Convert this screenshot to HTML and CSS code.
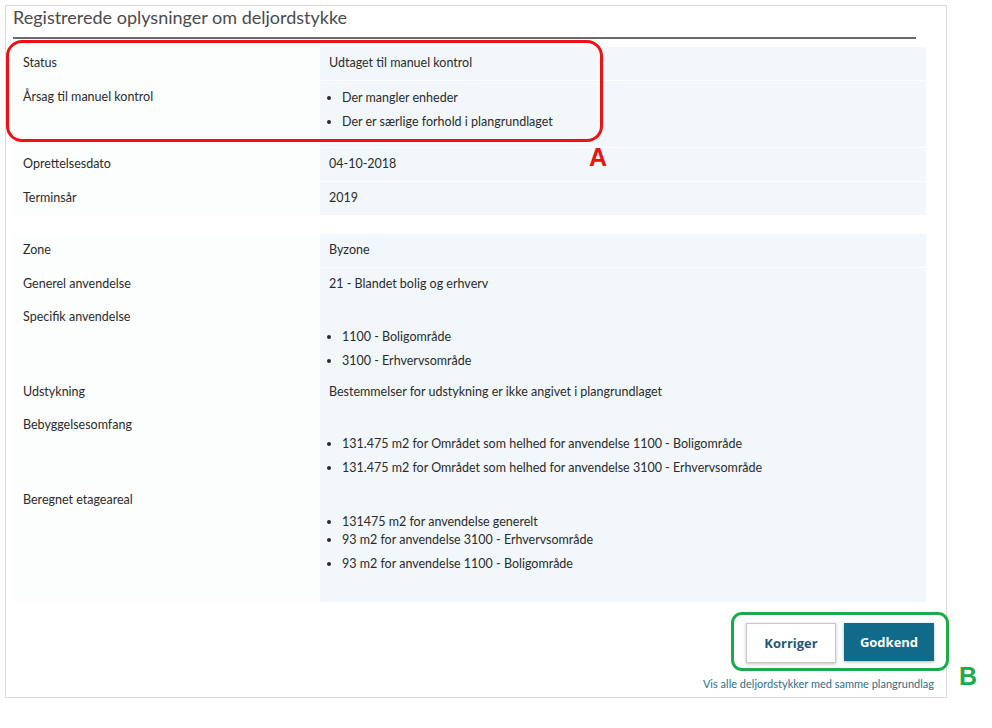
FILE: index.html
```html
<!DOCTYPE html>
<html lang="da">
<head>
    <meta charset="UTF-8">
    <title>Registrerede oplysninger om deljordstykke</title>
    <link rel="stylesheet" href="styles.css">
</head>
<body>
    <div class="page">
        <div class="panel">
            <h2 class="panel-title">Registrerede oplysninger om deljordstykke</h2>

            <div class="group group-first">
                <div class="row divided">
                    <div class="label">Status</div>
                    <div class="value">Udtaget til manuel kontrol</div>
                </div>
                <div class="row divided">
                    <div class="label">Årsag til manuel kontrol</div>
                    <div class="value">
                        <ul class="list list-reason">
                            <li>Der mangler enheder</li>
                            <li>Der er særlige forhold i plangrundlaget</li>
                        </ul>
                    </div>
                </div>
                <div class="row divided">
                    <div class="label">Oprettelsesdato</div>
                    <div class="value">04-10-2018</div>
                </div>
                <div class="row">
                    <div class="label">Terminsår</div>
                    <div class="value">2019</div>
                </div>
            </div>

            <div class="group">
                <div class="row divided">
                    <div class="label">Zone</div>
                    <div class="value">Byzone</div>
                </div>
                <div class="row">
                    <div class="label">Generel anvendelse</div>
                    <div class="value">21 - Blandet bolig og erhverv</div>
                </div>
                <div class="row">
                    <div class="label">Specifik anvendelse</div>
                    <div class="value">
                        <ul class="list list-usage">
                            <li>1100 - Boligområde</li>
                            <li>3100 - Erhvervsområde</li>
                        </ul>
                    </div>
                </div>
                <div class="row">
                    <div class="label">Udstykning</div>
                    <div class="value">Bestemmelser for udstykning er ikke angivet i plangrundlaget</div>
                </div>
                <div class="row">
                    <div class="label">Bebyggelsesomfang</div>
                    <div class="value">
                        <ul class="list list-extent">
                            <li>131.475 m2 for Området som helhed for anvendelse 1100 - Boligområde</li>
                            <li>131.475 m2 for Området som helhed for anvendelse 3100 - Erhvervsområde</li>
                        </ul>
                    </div>
                </div>
                <div class="row">
                    <div class="label">Beregnet etageareal</div>
                    <div class="value">
                        <ul class="list list-area">
                            <li class="tight">131475 m2 for anvendelse generelt</li>
                            <li>93 m2 for anvendelse 3100 - Erhvervsområde</li>
                            <li>93 m2 for anvendelse 1100 - Boligområde</li>
                        </ul>
                    </div>
                </div>
            </div>

            <div class="actions">
                <div class="buttons">
                    <button class="btn btn-secondary">Korriger</button>
                    <button class="btn btn-primary">Godkend</button>
                </div>
                <a class="link" href="#">Vis alle deljordstykker med samme plangrundlag</a>
            </div>
        </div>

        <!-- annotations drawn over the screenshot -->
        <div class="mark mark-a"></div>
        <span class="mark-letter letter-a">A</span>
        <div class="mark mark-b"></div>
        <span class="mark-letter letter-b">B</span>
    </div>
</body>
</html>
```

FILE: styles.css
```css
body {
    margin: 0;
    font-family: Lato, "Open Sans", sans-serif;
    font-size: 12.5px;
    color: #2b2b2b;
    background-color: #ffffff;
}
.page {
    position: relative;
    width: 992px;
    height: 728px;
}
.panel {
    position: relative;
    top: 5px;
    margin-left: 5px;
    width: 913px;
    height: 691px;
    border: 1px solid #dcdcdc;
    padding: 0 20px 0 7px;
}
.panel-title {
    margin: 0 10px 8px 0;
    padding: 0 0 9px 0;
    font-size: 18px;
    font-weight: normal;
    line-height: 22px;
    color: #4a4a4a;
    border-bottom: 2px solid #6a6a6a;
}
.group {
    display: flex;
    flex-direction: column;
}
.group-first {
    margin-bottom: 19px;
}
.row {
    display: grid;
    grid-template-columns: 307px 1fr;
}
.row.divided {
    margin-bottom: 1px;
}
.label {
    padding: 6px 10px 7px;
    line-height: 20px;
    background-color: #fcfdfd;
}
.value {
    padding: 6px 9px 7px;
    line-height: 20px;
    background-color: #f1f7fa;
}
.list {
    margin: 0;
    padding-left: 13px;
}
.list li {
    margin-bottom: 4px;
}
.list li:last-child {
    margin-bottom: 0;
}
.list li.tight {
    margin-bottom: -2px;
}
.list-reason {
    margin-top: 1px;
    margin-bottom: 8px;
}
.list-usage {
    margin-top: 20px;
    margin-bottom: -2px;
}
.list-extent {
    margin-top: 19px;
    margin-bottom: -1px;
}
.list-area {
    margin-top: 22px;
    margin-bottom: 21px;
}
.actions {
    display: flex;
    flex-direction: column;
    align-items: flex-end;
    margin-top: 21px;
    margin-right: -8px;
}
.buttons {
    display: flex;
    gap: 8px;
}
.btn {
    height: 40px;
    width: 90px;
    font-family: "Open Sans", sans-serif;
    font-size: 13px;
    font-weight: bold;
    cursor: pointer;
}
.btn-secondary {
    background-color: #ffffff;
    color: #1e5a78;
    border: 1px solid #c8c8c8;
    box-shadow: 0 1px 3px rgba(0, 0, 0, 0.25);
}
.btn-primary {
    height: 38px;
    background-color: #106a8a;
    color: #ffffff;
    border: none;
    box-shadow: 0 1px 3px rgba(0, 0, 0, 0.3);
}
.link {
    margin-top: 14px;
    font-size: 11px;
    color: #2d6f8c;
    text-decoration: none;
}
.mark {
    position: absolute;
    box-sizing: border-box;
    border-style: solid;
}
.mark-a {
    left: 6px;
    top: 40px;
    width: 597px;
    height: 102px;
    border-width: 3px;
    border-color: #ee1111;
    border-radius: 16px;
}
.mark-b {
    left: 731px;
    top: 612px;
    width: 218px;
    height: 59px;
    border-width: 3px;
    border-color: #1bab48;
    border-radius: 11px;
}
.mark-letter {
    position: absolute;
    font-family: "Liberation Sans", Arial, sans-serif;
    font-weight: bold;
    font-size: 25px;
}
.letter-a {
    left: 589px;
    top: 143px;
    color: #ee1111;
}
.letter-b {
    left: 959px;
    top: 662px;
    color: #1bab48;
}
```
